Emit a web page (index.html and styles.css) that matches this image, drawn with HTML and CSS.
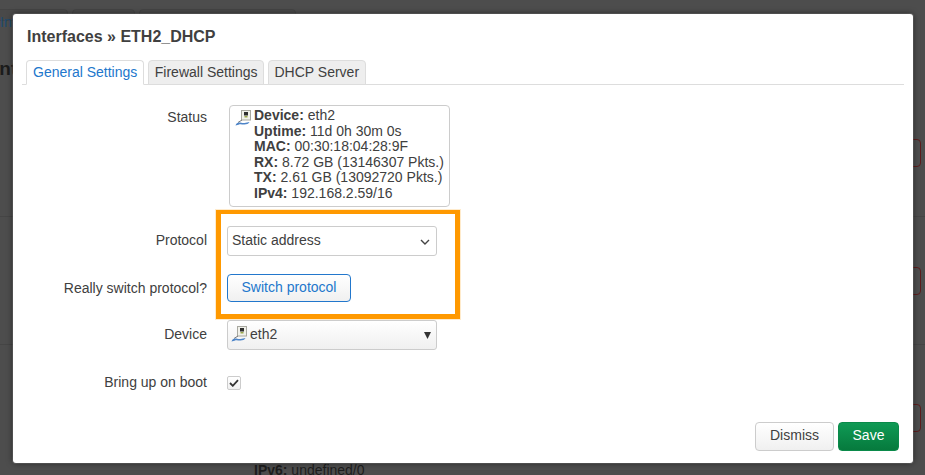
FILE: index.html
```html
<!DOCTYPE html>
<html lang="en">
<head>
<meta charset="utf-8">
<title>Interfaces » ETH2_DHCP</title>
<link rel="stylesheet" href="styles.css">
</head>
<body>
<div class="backdrop">
  <div class="bg-tab bg-tab-1"></div>
  <div class="bg-tab bg-tab-2"></div>
  <div class="bg-tab bg-tab-3"></div>
  <span class="bg-link">Inf</span>
  <span class="bg-heading">Int</span>
  <div class="bg-line bg-line-1"></div>
  <div class="bg-line bg-line-2"></div>
  <div class="bg-del bg-del-1"></div>
  <div class="bg-del bg-del-2"></div>
  <div class="bg-del bg-del-3"></div>
  <span class="bg-ipv6"><b>IPv6:</b> undefined/0</span>
</div>
<main class="modal">
  <h4 class="title">Interfaces » ETH2_DHCP</h4>
  <ul class="tabs">
    <li class="tab active">General Settings</li>
    <li class="tab">Firewall Settings</li>
    <li class="tab">DHCP Server</li>
  </ul>
  <div class="form">
    <div class="row row-status">
      <div class="label">Status</div>
      <div class="status">
        <svg class="net-icon" width="16" height="16" viewBox="0 0 16 16"><rect x="6.500" y="0.500" width="9" height="9.500" fill="#f1f1ea" stroke="#a8a8a0"/><rect x="9" y="2" width="4" height="3.500" fill="#2e2e2e"/><rect x="9.500" y="6" width="3" height="1.500" fill="#9aa84a"/><path d="M7 10 3 12.500" stroke="#777" fill="none"/><path d="M.5 15.500c.5-2 2-3 3.500-3 2 0 3.500.8 5.500.5l5-1c-1 1.800-3 2.400-5 2.500-2.500.1-4-.8-6 .2z" fill="#4d84c8"/></svg>
        <div class="status-text">
          <div><b>Device:</b> eth2</div>
          <div><b>Uptime:</b> 11d 0h 30m 0s</div>
          <div><b>MAC:</b> 00:30:18:04:28:9F</div>
          <div><b>RX:</b> 8.72 GB (13146307 Pkts.)</div>
          <div><b>TX:</b> 2.61 GB (13092720 Pkts.)</div>
          <div><b>IPv4:</b> 192.168.2.59/16</div>
        </div>
      </div>
    </div>
    <div class="row row-protocol">
      <div class="label">Protocol</div>
      <div class="select">
        <span>Static address</span>
        <svg class="chevron" width="10" height="6" viewBox="0 0 10 6"><path d="M1 1l4 4 4-4" fill="none" stroke="#444" stroke-width="1.400"/></svg>
      </div>
    </div>
    <div class="row row-switch">
      <div class="label">Really switch protocol?</div>
      <div class="btn-switch">Switch protocol</div>
    </div>
    <div class="row row-device">
      <div class="label">Device</div>
      <div class="select select-device">
        <svg class="net-icon-small" width="16" height="16" viewBox="0 0 16 16"><rect x="6.500" y="0.500" width="9" height="9.500" fill="#f1f1ea" stroke="#a8a8a0"/><rect x="9" y="2" width="4" height="3.500" fill="#2e2e2e"/><rect x="9.500" y="6" width="3" height="1.500" fill="#9aa84a"/><path d="M7 10 3 12.500" stroke="#777" fill="none"/><path d="M.5 15.500c.5-2 2-3 3.500-3 2 0 3.500.8 5.500.5l5-1c-1 1.800-3 2.400-5 2.500-2.500.1-4-.8-6 .2z" fill="#4d84c8"/></svg>
        <span class="device-name">eth2</span>
        <svg class="caret" width="7" height="7" viewBox="0 0 7 7"><path d="M0 0h7L3.500 7z" fill="#333"/></svg>
      </div>
    </div>
    <div class="row row-boot">
      <div class="label">Bring up on boot</div>
      <div class="checkbox">
        <svg width="10" height="8" viewBox="0 0 10 8"><path d="M1 4l2.800 2.800L9 1.200" fill="none" stroke="#333" stroke-width="1.800"/></svg>
      </div>
    </div>
  </div>
  <div class="footer">
    <div class="btn btn-dismiss">Dismiss</div>
    <div class="btn btn-save">Save</div>
  </div>
  <div class="highlight"></div>
</main>
</body>
</html>
```
FILE: styles.css
```css
* { box-sizing: border-box; }
html, body { margin: 0; height: 100%; overflow: hidden; }
body {
  width: 925px;
  height: 475px;
  padding: 14px 12px 12px 13px;
  background: #4d4d4d;
  font-family: "Liberation Sans", Arial, sans-serif;
  font-size: 14px;
  color: #404040;
}
.backdrop { position: absolute; inset: 0; overflow: hidden; }
.bg-tab { position: absolute; top: 9px; height: 12px; border: 1px solid #444; border-radius: 4px; background: #494949; }
.bg-tab-1 { left: -10px; width: 78px; }
.bg-tab-2 { left: 72px; width: 63px; }
.bg-tab-3 { left: 139px; width: 157px; }
.bg-link { position: absolute; left: 0; top: 14px; font-size: 14px; color: #1c4a6e; }
.bg-heading { position: absolute; left: -6px; top: 58px; font-size: 19px; font-weight: 700; color: #1c1c1c; }
.bg-line { position: absolute; left: 0; right: 0; height: 1px; background: #454545; }
.bg-line-1 { top: 216px; }
.bg-line-2 { top: 344px; }
.bg-del { position: absolute; left: 879px; width: 42px; height: 28px; border: 1px solid #5c1d1d; border-radius: 4px; }
.bg-del-1 { top: 139px; }
.bg-del-2 { top: 267px; }
.bg-del-3 { top: 404px; }
.bg-ipv6 { position: absolute; left: 254px; top: 462px; font-size: 14px; color: #1d1d1d; }
.modal {
  position: relative;
  width: 900px;
  height: 449px;
  padding: 14px 9px 12px 9px;
  background: #fff;
  border-radius: 3px;
  box-shadow: 0 0 6px rgba(0, 0, 0, .55), 0 0 0 1px rgba(255, 255, 255, .15);
}
.title { margin: 0 0 0 5px; font-size: 16px; line-height: 18px; font-weight: 700; color: #404040; }
.tabs {
  display: flex;
  gap: 4px;
  list-style: none;
  margin: 14px 0 0;
  padding: 0 0 0 4px;
  height: 25px;
  border-bottom: 1px solid #ddd;
}
.tab {
  height: 25px;
  padding: 0 5.500px;
  line-height: 23px;
  background: #eee;
  border: 1px solid #ddd;
  border-radius: 4px 4px 0 0;
  color: #404040;
}
.tab.active { background: #fff; color: #2277cc; border-bottom-color: #fff; padding: 0 6px; }
.form { display: flex; flex-direction: column; padding-top: 20px; }
.row { display: flex; align-items: center; }
.label { width: 185px; flex: none; text-align: right; margin-right: 20px; color: #404040; }
.row-status { align-items: flex-start; height: 102px; }
.row-status .label { padding-top: 4px; line-height: 16px; }
.row-protocol .label, .row-device .label, .row-boot .label { padding-bottom: 2px; }
.row-protocol { margin-top: 19px; height: 30px; }
.row-switch { margin-top: 18px; height: 28px; }
.row-device { margin-top: 18px; height: 30px; }
.row-boot { margin-top: 25px; height: 16px; }
.status {
  display: flex;
  gap: 3px;
  width: 221px;
  height: 102px;
  margin-left: 2px;
  padding: 2px 5px;
  border: 1px solid #ccc;
  border-radius: 4px;
  font-size: 14px;
  line-height: 15.500px;
}
.net-icon { flex: none; margin-top: 2px; }
.net-icon-small { flex: none; margin-left: -1px; }
.status-text { white-space: nowrap; }
.select {
  display: flex;
  align-items: center;
  justify-content: space-between;
  width: 210px;
  height: 30px;
  padding: 0 5px 2px 4px;
  border: 1px solid #ccc;
  border-radius: 3px;
  background: #fff;
}
.chevron { margin-right: 1px; margin-top: 4px; }
.select-device {
  justify-content: flex-start;
  gap: 3px;
  background: linear-gradient(#fff, #f0f0f0);
}
.device-name { flex: 1; }
.caret { flex: none; margin-top: 2px; }
.btn-switch {
  width: 124px;
  height: 28px;
  border: 1px solid #2277cc;
  border-radius: 4px;
  background: linear-gradient(#fff, #f0f0f0);
  color: #2277cc;
  text-align: center;
  line-height: 25px;
}
.checkbox {
  display: flex;
  align-items: center;
  justify-content: center;
  width: 14px;
  height: 14px;
  border: 1px solid #ccc;
  border-radius: 2px;
  background: linear-gradient(#fff, #f0f0f0);
}
.footer {
  position: absolute;
  right: 14px;
  bottom: 12px;
  display: flex;
  gap: 4px;
}
.btn { height: 29px; border-radius: 4px; text-align: center; line-height: 25px; }
.btn-dismiss { width: 79px; border: 1px solid #ccc; background: linear-gradient(#fff, #f0f0f0); color: #404040; }
.btn-save { width: 61px; border: 1px solid #0a8a4a; background: linear-gradient(#0f9a55, #067a3d); color: #fff; }
.highlight {
  position: absolute;
  left: 203px;
  top: 196px;
  width: 244px;
  height: 109px;
  border-style: solid;
  border-color: #ff9900;
  border-width: 4px 5px 5px 5px;
  box-shadow: 0 0 0 1px rgba(255, 153, 0, .2);
  pointer-events: none;
}
```
